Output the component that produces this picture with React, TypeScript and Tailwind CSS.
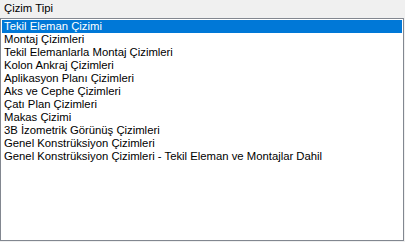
import React from "react";

const items = [
  "Tekil Eleman Çizimi",
  "Montaj Çizimleri",
  "Tekil Elemanlarla Montaj Çizimleri",
  "Kolon Ankraj Çizimleri",
  "Aplikasyon Planı Çizimleri",
  "Aks ve Cephe Çizimleri",
  "Çatı Plan Çizimleri",
  "Makas Çizimi",
  "3B İzometrik Görünüş Çizimleri",
  "Genel Konstrüksiyon Çizimleri",
  "Genel Konstrüksiyon Çizimleri - Tekil Eleman ve Montajlar Dahil",
];

export default function App() {
  return (
    <div
      className="w-[405px] h-[242px] bg-[#f0f0f0] text-[11.3px] leading-[13px] text-black overflow-hidden"
      style={{ fontFamily: '"Liberation Sans", Arial, sans-serif' }}
    >
      <div className="h-[18px] pl-[4px] pt-[2px]">Çizim Tipi</div>
      <div className="w-[404px] h-[223px] border border-[#828790] bg-white p-px">
        {items.map((t, i) => (
          <div
            key={t}
            className={
              i === 0
                ? "h-[13px] pl-[2px] bg-[#0078d7] text-white whitespace-nowrap"
                : "h-[13px] pl-[2px] whitespace-nowrap"
            }
          >
            {t}
          </div>
        ))}
      </div>
    </div>
  );
}
